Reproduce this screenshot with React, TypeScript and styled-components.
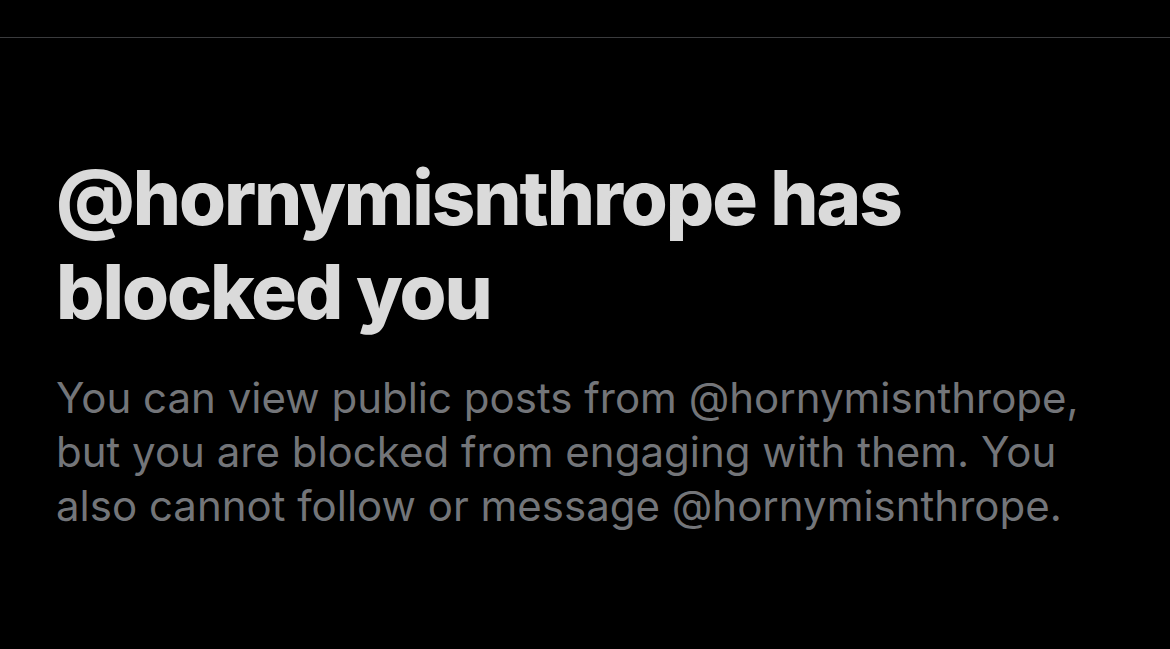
import React from "react";
import styled, { createGlobalStyle } from "styled-components";

const GlobalStyle = createGlobalStyle`
  html, body {
    margin: 0;
    padding: 0;
    background: #000000;
  }
  body {
    font-family: Inter, "Liberation Sans", sans-serif;
    -webkit-font-smoothing: antialiased;
  }
`;

const Page = styled.main`
  min-height: 649px;
  background: #000000;
  display: flex;
  flex-direction: column;
`;

const TopBar = styled.div`
  height: 37px;
  border-bottom: 1px solid #3a3b3d;
`;

const Content = styled.section`
  display: flex;
  flex-direction: column;
  gap: 33px;
  padding: 112px 56px 0 56px;
`;

const Title = styled.h1`
  margin: 0;
  font-family: Inter, "Liberation Sans", sans-serif;
  font-weight: 800;
  font-size: 76px;
  line-height: 94px;
  letter-spacing: -2.05px;
  color: #dadada;
`;

const Description = styled.p`
  margin: 0;
  font-family: Inter, "Liberation Sans", sans-serif;
  font-weight: 400;
  font-size: 42px;
  line-height: 54px;
  color: #737579;
`;

export default function App() {
  const handle = "@hornymisnthrope";
  const title = `${handle} has blocked you`;
  const description = `You can view public posts from ${handle}, but you are blocked from engaging with them. You also cannot follow or message ${handle}.`;
  return (
    <>
      <GlobalStyle />
      <Page>
        <TopBar />
        <Content>
          <Title>{title}</Title>
          <Description>{description}</Description>
        </Content>
      </Page>
    </>
  );
}
